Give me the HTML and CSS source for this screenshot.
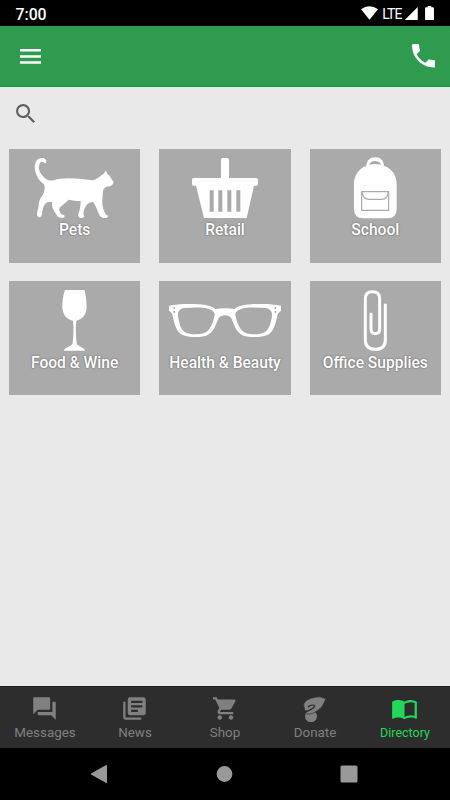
FILE: index.html
```html
<!DOCTYPE html>
<html lang="en">
<head>
    <meta charset="UTF-8">
    <meta name="viewport" content="width=device-width, initial-scale=1.0">
    <title>Directory</title>
    <link rel="stylesheet" href="styles.css">
</head>
<body>
    <div class="status-bar">
        <span class="time">7:00</span>
        <svg class="wifi" viewBox="0 0 51 41"><path d="M0 10 Q25 -9 51 10 L25.500 41 Z"/></svg>
        <span class="lte">LTE</span>
        <svg class="signal" viewBox="0 0 41 41"><path d="M41 0 V41 H0 Z"/></svg>
        <svg class="battery" viewBox="0 0 27 44"><path d="M8 0 H19 V4 H24 Q27 4 27 7 V41 Q27 44 24 44 H3 Q0 44 0 41 V7 Q0 4 3 4 H8 Z"/></svg>
    </div>

    <header class="app-bar">
        <button class="icon-btn" aria-label="Menu">
            <svg class="menu-icon" viewBox="0 0 21 15"><path d="M0 0h21v2.500H0zM0 6.200h21v2.500H0zM0 12.300h21v2.500H0z"/></svg>
        </button>
        <button class="icon-btn" aria-label="Call">
            <svg class="phone-icon" viewBox="3 3 18 18"><path d="M6.620 10.790c1.440 2.830 3.760 5.140 6.590 6.590l2.200-2.200c.27-.27.67-.36 1.020-.24 1.120.37 2.330.57 3.570.57.55 0 1 .45 1 1V20c0 .55-.45 1-1 1-9.390 0-17-7.610-17-17 0-.55.45-1 1-1h3.500c.55 0 1 .45 1 1 0 1.250.2 2.450.57 3.570.11.35.03.74-.25 1.020l-2.200 2.200z"/></svg>
        </button>
    </header>

    <main class="content">
        <div class="search">
            <svg viewBox="3 3 17.490 17.490"><path d="M15.500 14h-.79l-.28-.27A6.471 6.471 0 0 0 16 9.500 6.500 6.500 0 1 0 9.500 16c1.610 0 3.090-.59 4.230-1.570l.27.28v.79l5 4.990L20.490 19l-4.990-5zm-6 0C7.010 14 5 11.990 5 9.500S7.010 5 9.500 5 14 7.010 14 9.500 11.990 14 9.500 14z"/></svg>
        </div>

        <div class="categories">
            <div class="tile">
                <svg viewBox="27 27 394 214"><path d="M139 67 C141 59 133 53 124 54 C108 56 102 73 105 90 C108 109 119 124 133 134 C136 145 132 157 128 166 C120 175 116 184 116 197 L111 220 C109 229 115 233 121 231 C126 229 125 222 127 216 C129 203 132 191 143 187 L157 185 C153 202 162 211 168 222 C172 230 176 235 192 233 C197 229 192 224 185 223 C179 216 175 210 179 203 L206 179 C218 181 230 183 242 183 C242 199 240 209 236 219 C233 225 235 230 239 233 C245 235 252 233 253 229 C248 220 252 209 256 201 C260 193 266 187 278 185 C286 193 291 206 294 216 C299 227 301 235 319 234 C326 232 325 225 318 224 C310 212 306 197 307 181 L309 151 C312 144 318 139 330 139 C337 137 342 129 341 126 L333 115 C331 109 326 105 322 103 L318 91 L311 102 C302 106 294 117 279 121 C249 118 208 110 171 118 C162 121 153 123 145 121 C127 111 115 95 117 79 C118 67 124 63 130 67 C134 71 138 71 139 67 Z"/></svg>
                <span class="label">Pets</span>
            </div>
            <div class="tile">
                <svg viewBox="27 27 394 214">
                    <path fill-rule="evenodd" d="M213 114 V59 Q213 54 218 54 H232 Q237 54 237 59 V114 H319 Q324 114 324 119 V132 Q324 137 319 137 H312 L290 234 H162 L138 137 H131 Q126 137 126 132 V119 Q126 114 131 114 Z M179 151 V215 H191 V151 Z M205 151 V215 H217 V151 Z M232 151 V215 H244 V151 Z M259 151 V215 H271 V151 Z"/>
                </svg>
                <span class="label">Retail</span>
            </div>
            <div class="tile">
                <svg viewBox="30 27 394 214">
                    <path fill-rule="evenodd" d="M199 78 C200 61 210 52 225 52 C241 52 251 61 252 78 C275 85 290 106 290 132 V207 Q290 235 262 235 H190 Q162 235 162 207 V132 C162 106 177 85 199 78 Z M208 74 Q226 70 243 74 C240 59 211 59 208 74 Z"/>
                    <path class="seam" d="M185 155 H266 V211 H185 Z M186 155 Q188 178 208 178 H244 Q264 178 265 155"/>
                </svg>
                <span class="label">School</span>
            </div>
            <div class="tile">
                <svg viewBox="27 27 394 214"><path d="M195 54 H253 C257 66 260 87 260 104 C260 126 248 142 229 146 C226 169 228 195 230 214 C232 226 254 225 255 236 H192 C193 225 215 226 218 214 C220 195 222 169 219 146 C199 142 187 126 187 104 C187 87 190 66 195 54 Z"/></svg>
                <span class="label">Food &amp; Wine</span>
            </div>
            <div class="tile">
                <svg viewBox="27 27 394 214">
                    <path fill-rule="evenodd" d="M57 101 C83 95 116 95 145 97 C169 98 186 103 196 111 Q225 107 253 111 C263 103 280 98 304 97 C333 95 366 95 393 101 V117 C387 119 384 124 382 131 C377 158 369 180 354 188 C336 197 300 197 281 191 C257 183 253 157 244 139 C238 127 212 127 206 139 C197 157 192 183 168 191 C150 197 114 197 96 188 C80 180 73 158 68 131 C66 124 63 119 57 117 Z M103 108 C88 110 82 120 84 133 C87 154 93 174 105 181 C120 189 145 188 160 184 C182 177 190 148 194 128 C194 105 143 104 103 108 Z M346 108 C361 110 368 120 366 133 C363 154 357 174 344 181 C329 189 305 188 290 184 C268 177 260 148 256 128 C256 105 306 104 346 108 Z M70 106 V111 H75 V106 Z M70 117 V122 H75 V117 Z M374 106 V111 H379 V106 Z M374 117 V122 H379 V117 Z"/>
                </svg>
                <span class="label">Health &amp; Beauty</span>
            </div>
            <div class="tile">
                <svg viewBox="30 27 394 214"><path class="clip" d="M213 126 V172 Q213 185 226 185 Q239 185 239 172 V80 Q239 59 218 59 Q196 59 196 80 V204 Q196 232 226 232 Q256 232 256 204 V99"/></svg>
                <span class="label">Office Supplies</span>
            </div>
        </div>
    </main>

    <nav class="tabs">
        <a class="tab">
            <svg viewBox="0 0 24 24"><path d="M21 6h-2v9H6v2c0 .55.45 1 1 1h11l4 4V7c0-.55-.45-1-1-1zm-4 6V3c0-.55-.45-1-1-1H3c-.55 0-1 .45-1 1v14l4-4h10c.55 0 1-.45 1-1z"/></svg>
            <span>Messages</span>
        </a>
        <a class="tab">
            <svg viewBox="0 0 24 24"><path d="M4 6H2v14c0 1.100.9 2 2 2h14v-2H4V6z"/><path fill-rule="evenodd" d="M20 2H8c-1.100 0-2 .9-2 2v12c0 1.100.9 2 2 2h12c1.100 0 2-.9 2-2V4c0-1.100-.9-2-2-2zm-1 9H9V9h10v2zm-4 4H9v-2h6v2zm4-8H9V5h10v2z"/></svg>
            <span>News</span>
        </a>
        <a class="tab">
            <svg viewBox="-0.800 0 24 24"><path d="M7 18c-1.100 0-1.990.9-1.990 2S5.900 22 7 22s2-.9 2-2-.9-2-2-2zM1 2v2h2l3.600 7.590-1.350 2.450c-.16.28-.25.61-.25.96 0 1.100.9 2 2 2h12v-2H7.420c-.14 0-.25-.11-.25-.25l.03-.12.900-1.630h7.450c.75 0 1.410-.41 1.750-1.030l3.580-6.490c.08-.14.12-.31.12-.48 0-.55-.45-1-1-1H5.210l-.94-2H1zm16 16c-1.100 0-1.990.9-1.990 2s.89 2 1.990 2 2-.9 2-2-.9-2-2-2z"/></svg>
            <span>Shop</span>
        </a>
        <a class="tab">
            <svg viewBox="229 42 81 81">
                <circle cx="259" cy="106" r="18"/>
                <path class="hand" d="M237 72 C238 57 263 49 279 48 C289 46 296 52 304 54 C298 63 297 74 286 83 C276 90 268 97 256 99 C248 101 242 97 247 91 L240 88 Z"/>
                <path class="crease" d="M250 78 C257 72 266 71 270 74 C270 82 257 85 243 93"/>
            </svg>
            <span>Donate</span>
        </a>
        <a class="tab active">
            <svg viewBox="0 0 24 24"><path fill-rule="evenodd" d="M21 5c-1.110-.35-2.330-.5-3.500-.5-1.950 0-4.050.4-5.500 1.500-1.450-1.100-3.550-1.500-5.500-1.500S2.450 4.900 1 6v14.650c0 .25.25.5.5.5.1 0 .15-.05.25-.05C3.100 20.450 5.050 20 6.500 20c1.950 0 4.050.4 5.500 1.500 1.350-.85 3.800-1.500 5.500-1.500 1.650 0 3.350.3 4.750 1.050.1.050.15.050.25.050.25 0 .5-.25.5-.5V6c-.6-.45-1.250-.75-2-1zm0 13.500c-1.100-.35-2.300-.5-3.500-.5-1.700 0-4.150.65-5.500 1.500V8c1.350-.85 3.800-1.500 5.500-1.500 1.200 0 2.400.15 3.500.5v11.500z"/></svg>
            <span>Directory</span>
        </a>
    </nav>

    <div class="system-nav">
        <svg viewBox="0 0 18 18"><path d="M17 1 V17 Q17 18.500 15.700 17.700 L1.500 9.800 Q0.300 9 1.500 8.200 L15.700 0.300 Q17 -0.500 17 1 Z"/></svg>
        <svg viewBox="0 0 18 18"><circle cx="9.500" cy="9" r="7.900"/></svg>
        <svg viewBox="0 0 18 18"><rect x="0.500" y="0.500" width="17" height="17" rx="1.500"/></svg>
    </div>
</body>
</html>
```
FILE: styles.css
```css
* {
    box-sizing: border-box;
}
body {
    display: flex;
    flex-direction: column;
    height: 100vh;
    margin: 0;
    background-color: #e9e9e9;
    font-family: Roboto, sans-serif;
}
svg {
    display: block;
    fill: currentColor;
}
.status-bar {
    display: flex;
    align-items: center;
    height: 26px;
    padding: 0 16px 0 15.5px;
    background-color: #000;
    color: #fff;
}
.time {
    flex: 1;
    padding-top: 2px;
    font-size: 15.8px;
    font-weight: 500;
}
.wifi {
    width: 17px;
    height: 13.7px;
}
.lte {
    margin: 1px 2.5px 0 4px;
    font-size: 14px;
    letter-spacing: -0.9px;
}
.signal {
    width: 14px;
    height: 13.5px;
    margin-top: 1px;
}
.battery {
    width: 9px;
    height: 14.5px;
    margin-left: 7px;
}
.app-bar {
    display: flex;
    justify-content: space-between;
    align-items: center;
    height: 61px;
    padding: 0 15px 0 20px;
    background-color: #2e9b4f;
    border-bottom: 1px solid #109a3c;
    color: #fff;
}
.icon-btn {
    padding: 0;
    border: none;
    background: none;
    color: inherit;
}
.menu-icon {
    width: 21px;
    height: 15px;
}
.phone-icon {
    width: 23.5px;
    height: 23.5px;
}
.content {
    flex: 1;
    padding: 17px 9px 0;
}
.search {
    height: 45px;
    padding-left: 7px;
    color: #5f5f5f;
}
.search svg {
    width: 19px;
    height: 19px;
}
.categories {
    display: grid;
    grid-template-columns: repeat(3, 1fr);
    gap: 18.8px 19px;
}
.tile {
    height: 113.6px;
    background-color: #aaa;
    color: #fff;
    text-align: center;
}
.tile svg {
    width: 100%;
    height: 71.3px;
}
.seam {
    fill: none;
    stroke: #aaa;
    stroke-width: 3.5;
}
.clip {
    fill: none;
    stroke: #fff;
    stroke-width: 9;
    stroke-linecap: round;
}
.label {
    display: block;
    font-size: 15.6px;
    font-weight: 500;
    line-height: 20px;
    white-space: nowrap;
    text-shadow: 0 0 2px rgba(0, 0, 0, 0.5);
}
.tabs {
    display: grid;
    grid-template-columns: repeat(5, 1fr);
    height: 62px;
    background-color: #2d2d2d;
    border-top: 1px solid #1c1c1c;
    color: #808080;
}
.tab {
    display: flex;
    flex-direction: column;
    align-items: center;
    padding-top: 7.5px;
    font-size: 13.4px;
    line-height: 16px;
}
.tab svg {
    width: 27px;
    height: 27px;
    margin: 0 1px 3px 0;
}
.crease {
    fill: none;
    stroke: #2d2d2d;
    stroke-width: 4;
}
.hand {
    stroke: #2d2d2d;
    stroke-width: 2;
}
.tab.active {
    color: #22d85a;
    font-size: 12.5px;
}
.system-nav {
    display: flex;
    justify-content: space-between;
    align-items: center;
    height: 52px;
    padding: 0 92px 0 90px;
    background-color: #000;
    color: #999;
}
.system-nav svg {
    width: 18px;
    height: 18px;
}
```
